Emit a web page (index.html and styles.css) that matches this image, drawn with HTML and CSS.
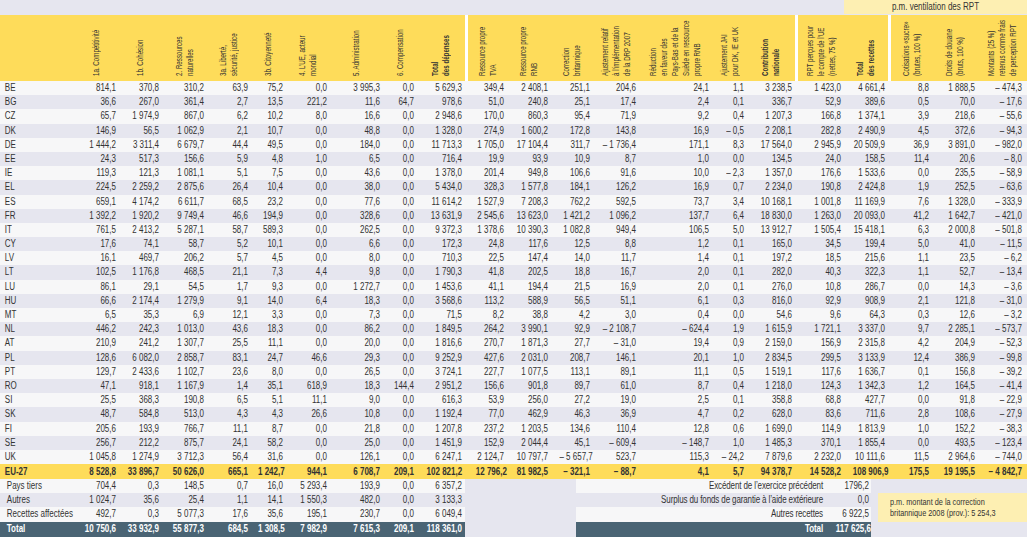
FILE: index.html
```html
<!DOCTYPE html>
<html lang="fr">
<head>
<meta charset="utf-8">
<title>Budget UE 2008</title>
<link rel="stylesheet" href="styles.css">
</head>
<body>
<div class="sheet">
  <div class="top"><div class="pm-head"><span>p.m. ventilation des RPT</span></div></div>
  <div class="head">
    <div></div>
    <div><span class="v">1a. Compétitivité</span></div>
    <div><span class="v">1b. Cohésion</span></div>
    <div><span class="v">2. Ressources<br>naturelles</span></div>
    <div><span class="v">3a. Liberté,<br>sécurité, justice</span></div>
    <div><span class="v">3b. Citoyenneté</span></div>
    <div><span class="v">4. L’UE, acteur<br>mondial</span></div>
    <div><span class="v">5. Administration</span></div>
    <div><span class="v">6. Compensation</span></div>
    <div><span class="v b">Total<br>des dépenses</span></div>
    <div class="sep"></div>
    <div><span class="v">Ressource propre<br>TVA</span></div>
    <div><span class="v">Ressource propre<br>RNB</span></div>
    <div><span class="v">Correction<br>britannique</span></div>
    <div><span class="v">Ajustement relatif<br>à l’implémentation<br>de la DRP 2007</span></div>
    <div><span class="v">Réduction<br>en faveur des<br>Pays-Bas et de la<br>Suède en ressource<br>propre RNB</span></div>
    <div><span class="v">Ajustement JAI<br>pour DK, IE et UK</span></div>
    <div><span class="v b">Contribution<br>nationale</span></div>
    <div class="sep"></div>
    <div><span class="v">RPT perçues pour<br>le compte de l’UE<br>(nettes, 75 %)</span></div>
    <div><span class="v b">Total<br>des recettes</span></div>
    <div class="sep"></div>
    <div><span class="v">Cotisations «sucre»<br>(brutes, 100 %)</span></div>
    <div><span class="v">Droits de douane<br>(bruts, 100 %)</span></div>
    <div><span class="v">Montants (25 %)<br>retenus comme frais<br>de perception RPT</span></div>
  </div>
  <div class="body">
    <div class="row"><span>BE</span><span>814,1</span><span>370,8</span><span>310,2</span><span>63,9</span><span>75,2</span><span>0,0</span><span>3 995,3</span><span>0,0</span><span>5 629,3</span><span>349,4</span><span>2 408,1</span><span>251,1</span><span>204,6</span><span>24,1</span><span>1,1</span><span>3 238,5</span><span>1 423,0</span><span>4 661,4</span><span>8,8</span><span>1 888,5</span><span>– 474,3</span></div>
    <div class="row"><span>BG</span><span>36,6</span><span>267,0</span><span>361,4</span><span>2,7</span><span>13,5</span><span>221,2</span><span>11,6</span><span>64,7</span><span>978,6</span><span>51,0</span><span>240,8</span><span>25,1</span><span>17,4</span><span>2,4</span><span>0,1</span><span>336,7</span><span>52,9</span><span>389,6</span><span>0,5</span><span>70,0</span><span>– 17,6</span></div>
    <div class="row"><span>CZ</span><span>65,7</span><span>1 974,9</span><span>867,0</span><span>6,2</span><span>10,2</span><span>8,0</span><span>16,6</span><span>0,0</span><span>2 948,6</span><span>170,0</span><span>860,3</span><span>95,4</span><span>71,9</span><span>9,2</span><span>0,4</span><span>1 207,3</span><span>166,8</span><span>1 374,1</span><span>3,9</span><span>218,6</span><span>– 55,6</span></div>
    <div class="row"><span>DK</span><span>146,9</span><span>56,5</span><span>1 062,9</span><span>2,1</span><span>10,7</span><span>0,0</span><span>48,8</span><span>0,0</span><span>1 328,0</span><span>274,9</span><span>1 600,2</span><span>172,8</span><span>143,8</span><span>16,9</span><span>– 0,5</span><span>2 208,1</span><span>282,8</span><span>2 490,9</span><span>4,5</span><span>372,6</span><span>– 94,3</span></div>
    <div class="row"><span>DE</span><span>1 444,2</span><span>3 311,4</span><span>6 679,7</span><span>44,4</span><span>49,5</span><span>0,0</span><span>184,0</span><span>0,0</span><span>11 713,3</span><span>1 705,0</span><span>17 104,4</span><span>311,7</span><span>– 1 736,4</span><span>171,1</span><span>8,3</span><span>17 564,0</span><span>2 945,9</span><span>20 509,9</span><span>36,9</span><span>3 891,0</span><span>– 982,0</span></div>
    <div class="row"><span>EE</span><span>24,3</span><span>517,3</span><span>156,6</span><span>5,9</span><span>4,8</span><span>1,0</span><span>6,5</span><span>0,0</span><span>716,4</span><span>19,9</span><span>93,9</span><span>10,9</span><span>8,7</span><span>1,0</span><span>0,0</span><span>134,5</span><span>24,0</span><span>158,5</span><span>11,4</span><span>20,6</span><span>– 8,0</span></div>
    <div class="row"><span>IE</span><span>119,3</span><span>121,3</span><span>1 081,1</span><span>5,1</span><span>7,5</span><span>0,0</span><span>43,6</span><span>0,0</span><span>1 378,0</span><span>201,4</span><span>949,8</span><span>106,6</span><span>91,6</span><span>10,0</span><span>– 2,3</span><span>1 357,0</span><span>176,6</span><span>1 533,6</span><span>0,0</span><span>235,5</span><span>– 58,9</span></div>
    <div class="row"><span>EL</span><span>224,5</span><span>2 259,2</span><span>2 875,6</span><span>26,4</span><span>10,4</span><span>0,0</span><span>38,0</span><span>0,0</span><span>5 434,0</span><span>328,3</span><span>1 577,8</span><span>184,1</span><span>126,2</span><span>16,9</span><span>0,7</span><span>2 234,0</span><span>190,8</span><span>2 424,8</span><span>1,9</span><span>252,5</span><span>– 63,6</span></div>
    <div class="row"><span>ES</span><span>659,1</span><span>4 174,2</span><span>6 611,7</span><span>68,5</span><span>23,2</span><span>0,0</span><span>77,6</span><span>0,0</span><span>11 614,2</span><span>1 527,9</span><span>7 208,3</span><span>762,2</span><span>592,5</span><span>73,7</span><span>3,4</span><span>10 168,1</span><span>1 001,8</span><span>11 169,9</span><span>7,6</span><span>1 328,0</span><span>– 333,9</span></div>
    <div class="row"><span>FR</span><span>1 392,2</span><span>1 920,2</span><span>9 749,4</span><span>46,6</span><span>194,9</span><span>0,0</span><span>328,6</span><span>0,0</span><span>13 631,9</span><span>2 545,6</span><span>13 623,0</span><span>1 421,2</span><span>1 096,2</span><span>137,7</span><span>6,4</span><span>18 830,0</span><span>1 263,0</span><span>20 093,0</span><span>41,2</span><span>1 642,7</span><span>– 421,0</span></div>
    <div class="row"><span>IT</span><span>761,5</span><span>2 413,2</span><span>5 287,1</span><span>58,7</span><span>589,3</span><span>0,0</span><span>262,5</span><span>0,0</span><span>9 372,3</span><span>1 378,6</span><span>10 390,3</span><span>1 082,8</span><span>949,4</span><span>106,5</span><span>5,0</span><span>13 912,7</span><span>1 505,4</span><span>15 418,1</span><span>6,3</span><span>2 000,8</span><span>– 501,8</span></div>
    <div class="row"><span>CY</span><span>17,6</span><span>74,1</span><span>58,7</span><span>5,2</span><span>10,1</span><span>0,0</span><span>6,6</span><span>0,0</span><span>172,3</span><span>24,8</span><span>117,6</span><span>12,5</span><span>8,8</span><span>1,2</span><span>0,1</span><span>165,0</span><span>34,5</span><span>199,4</span><span>5,0</span><span>41,0</span><span>– 11,5</span></div>
    <div class="row"><span>LV</span><span>16,1</span><span>469,7</span><span>206,2</span><span>5,7</span><span>4,5</span><span>0,0</span><span>8,0</span><span>0,0</span><span>710,3</span><span>22,5</span><span>147,4</span><span>14,0</span><span>11,7</span><span>1,4</span><span>0,1</span><span>197,2</span><span>18,5</span><span>215,6</span><span>1,1</span><span>23,5</span><span>– 6,2</span></div>
    <div class="row"><span>LT</span><span>102,5</span><span>1 176,8</span><span>468,5</span><span>21,1</span><span>7,3</span><span>4,4</span><span>9,8</span><span>0,0</span><span>1 790,3</span><span>41,8</span><span>202,5</span><span>18,8</span><span>16,7</span><span>2,0</span><span>0,1</span><span>282,0</span><span>40,3</span><span>322,3</span><span>1,1</span><span>52,7</span><span>– 13,4</span></div>
    <div class="row"><span>LU</span><span>86,1</span><span>29,1</span><span>54,5</span><span>1,7</span><span>9,3</span><span>0,0</span><span>1 272,7</span><span>0,0</span><span>1 453,6</span><span>41,1</span><span>194,4</span><span>21,5</span><span>16,9</span><span>2,0</span><span>0,1</span><span>276,0</span><span>10,8</span><span>286,7</span><span>0,0</span><span>14,3</span><span>– 3,6</span></div>
    <div class="row"><span>HU</span><span>66,6</span><span>2 174,4</span><span>1 279,9</span><span>9,1</span><span>14,0</span><span>6,4</span><span>18,3</span><span>0,0</span><span>3 568,6</span><span>113,2</span><span>588,9</span><span>56,5</span><span>51,1</span><span>6,1</span><span>0,3</span><span>816,0</span><span>92,9</span><span>908,9</span><span>2,1</span><span>121,8</span><span>– 31,0</span></div>
    <div class="row"><span>MT</span><span>6,5</span><span>35,3</span><span>6,9</span><span>12,1</span><span>3,3</span><span>0,0</span><span>7,3</span><span>0,0</span><span>71,5</span><span>8,2</span><span>38,8</span><span>4,2</span><span>3,0</span><span>0,4</span><span>0,0</span><span>54,6</span><span>9,6</span><span>64,3</span><span>0,3</span><span>12,6</span><span>– 3,2</span></div>
    <div class="row"><span>NL</span><span>446,2</span><span>242,3</span><span>1 013,0</span><span>43,6</span><span>18,3</span><span>0,0</span><span>86,2</span><span>0,0</span><span>1 849,5</span><span>264,2</span><span>3 990,1</span><span>92,9</span><span>– 2 108,7</span><span>– 624,4</span><span>1,9</span><span>1 615,9</span><span>1 721,1</span><span>3 337,0</span><span>9,7</span><span>2 285,1</span><span>– 573,7</span></div>
    <div class="row"><span>AT</span><span>210,9</span><span>241,2</span><span>1 307,7</span><span>25,5</span><span>11,1</span><span>0,0</span><span>20,0</span><span>0,0</span><span>1 816,6</span><span>270,7</span><span>1 871,3</span><span>27,7</span><span>– 31,0</span><span>19,4</span><span>0,9</span><span>2 159,0</span><span>156,9</span><span>2 315,8</span><span>4,2</span><span>204,9</span><span>– 52,3</span></div>
    <div class="row"><span>PL</span><span>128,6</span><span>6 082,0</span><span>2 858,7</span><span>83,1</span><span>24,7</span><span>46,6</span><span>29,3</span><span>0,0</span><span>9 252,9</span><span>427,6</span><span>2 031,0</span><span>208,7</span><span>146,1</span><span>20,1</span><span>1,0</span><span>2 834,5</span><span>299,5</span><span>3 133,9</span><span>12,4</span><span>386,9</span><span>– 99,8</span></div>
    <div class="row"><span>PT</span><span>129,7</span><span>2 433,6</span><span>1 102,7</span><span>23,6</span><span>8,0</span><span>0,0</span><span>26,5</span><span>0,0</span><span>3 724,1</span><span>227,7</span><span>1 077,5</span><span>113,1</span><span>89,1</span><span>11,1</span><span>0,5</span><span>1 519,1</span><span>117,6</span><span>1 636,7</span><span>0,1</span><span>156,8</span><span>– 39,2</span></div>
    <div class="row"><span>RO</span><span>47,1</span><span>918,1</span><span>1 167,9</span><span>1,4</span><span>35,1</span><span>618,9</span><span>18,3</span><span>144,4</span><span>2 951,2</span><span>156,6</span><span>901,8</span><span>89,7</span><span>61,0</span><span>8,7</span><span>0,4</span><span>1 218,0</span><span>124,3</span><span>1 342,3</span><span>1,2</span><span>164,5</span><span>– 41,4</span></div>
    <div class="row"><span>SI</span><span>25,5</span><span>368,3</span><span>190,8</span><span>6,5</span><span>5,1</span><span>11,1</span><span>9,0</span><span>0,0</span><span>616,3</span><span>53,9</span><span>256,0</span><span>27,2</span><span>19,0</span><span>2,5</span><span>0,1</span><span>358,8</span><span>68,8</span><span>427,7</span><span>0,0</span><span>91,8</span><span>– 22,9</span></div>
    <div class="row"><span>SK</span><span>48,7</span><span>584,8</span><span>513,0</span><span>4,3</span><span>4,3</span><span>26,6</span><span>10,8</span><span>0,0</span><span>1 192,4</span><span>77,0</span><span>462,9</span><span>46,3</span><span>36,9</span><span>4,7</span><span>0,2</span><span>628,0</span><span>83,6</span><span>711,6</span><span>2,8</span><span>108,6</span><span>– 27,9</span></div>
    <div class="row"><span>FI</span><span>205,6</span><span>193,9</span><span>766,7</span><span>11,1</span><span>8,7</span><span>0,0</span><span>21,8</span><span>0,0</span><span>1 207,8</span><span>237,2</span><span>1 203,5</span><span>134,6</span><span>110,4</span><span>12,8</span><span>0,6</span><span>1 699,0</span><span>114,9</span><span>1 813,9</span><span>1,0</span><span>152,2</span><span>– 38,3</span></div>
    <div class="row"><span>SE</span><span>256,7</span><span>212,2</span><span>875,7</span><span>24,1</span><span>58,2</span><span>0,0</span><span>25,0</span><span>0,0</span><span>1 451,9</span><span>152,9</span><span>2 044,4</span><span>45,1</span><span>– 609,4</span><span>– 148,7</span><span>1,0</span><span>1 485,3</span><span>370,1</span><span>1 855,4</span><span>0,0</span><span>493,5</span><span>– 123,4</span></div>
    <div class="row"><span>UK</span><span>1 045,8</span><span>1 274,9</span><span>3 712,3</span><span>56,4</span><span>31,6</span><span>0,0</span><span>126,1</span><span>0,0</span><span>6 247,1</span><span>2 124,7</span><span>10 797,7</span><span>– 5 657,7</span><span>523,7</span><span>115,3</span><span>– 24,2</span><span>7 879,6</span><span>2 232,0</span><span>10 111,6</span><span>11,5</span><span>2 964,6</span><span>– 744,0</span></div>
  </div>
  <div class="row eu"><span>EU-27</span><span>8 528,8</span><span>33 896,7</span><span>50 626,0</span><span>665,1</span><span>1 242,7</span><span>944,1</span><span>6 708,7</span><span>209,1</span><span>102 821,2</span><span>12 796,2</span><span>81 982,5</span><span>– 321,1</span><span>– 88,7</span><span>4,1</span><span>5,7</span><span>94 378,7</span><span>14 528,2</span><span>108 906,9</span><span>175,5</span><span>19 195,5</span><span>– 4 842,7</span></div>
  <div class="foot">
    <div class="fl">
      <div class="frow"><span>Pays tiers</span><span>704,4</span><span>0,3</span><span>148,5</span><span>0,7</span><span>16,0</span><span>5 293,4</span><span>193,9</span><span>0,0</span><span>6 357,2</span></div>
      <div class="frow alt"><span>Autres</span><span>1 024,7</span><span>35,6</span><span>25,4</span><span>1,1</span><span>14,1</span><span>1 550,3</span><span>482,0</span><span>0,0</span><span>3 133,3</span></div>
      <div class="frow r3"><span>Recettes affectées</span><span>492,7</span><span>0,3</span><span>5 077,3</span><span>17,6</span><span>35,6</span><span>195,1</span><span>230,7</span><span>0,0</span><span>6 049,4</span></div>
      <div class="frow tot"><span>Total</span><span>10 750,6</span><span>33 932,9</span><span>55 877,3</span><span>684,5</span><span>1 308,5</span><span>7 982,9</span><span>7 615,3</span><span>209,1</span><span>118 361,0</span></div>
    </div>
    <div class="gap"></div>
    <div class="fm">
      <div class="frow"><span>Excédent de l’exercice précédent</span><span>1796,2</span></div>
      <div class="frow alt"><span>Surplus du fonds de garantie à l’aide extérieure</span><span>0,0</span></div>
      <div class="frow r3"><span>Autres recettes</span><span>6 922,5</span></div>
      <div class="frow tot"><span>Total</span><span>117 625,6</span></div>
    </div>
    <div class="fs">
      <div class="note"><span>p.m. montant de la correction</span><span>britannique 2008 (prov.): 5 254,3</span></div>
    </div>
  </div>
</div>
</body>
</html>
```

FILE: styles.css
```css
* {
  box-sizing: border-box;
  margin: 0;
  padding: 0;
}

html, body {
  width: 1027px;
  height: 537px;
  overflow: hidden;
}

body {
  background: #e6e6ef;
  color: #333;
  font-family: "Liberation Sans", Arial, sans-serif;
  font-size: 10px;
}

.sheet {
  --cols: 74px 45px 43px 45px 44px 35px 44px 53px 34px 48px 3px 39px 44px 42px 46px 73px 35px 48px 3px 46px 44px 3px 41px 46px 49px;
  width: 1027px;
}

.top {
  display: grid;
  grid-template-columns: var(--cols);
  height: 15px;
}

.pm-head {
  grid-column: 21 / 26;
  height: 14px;
  background: #fdefb2;
  text-align: center;
  line-height: 14px;
}

.pm-head > span {
  display: inline-block;
  transform: scaleX(0.8);
  white-space: nowrap;
}

.head {
  display: grid;
  grid-template-columns: var(--cols);
  height: 66px;
  background: #fedc5a;
}

.head > div {
  display: flex;
  align-items: flex-end;
  justify-content: center;
  padding-bottom: 5px;
}

.head > .sep {
  background: #fff;
}

/* rotated label: the box is 0 high and sits on the bottom padding line;
   text is flipped upward from there and compressed along its length */
.v {
  writing-mode: vertical-rl;
  height: 0;
  white-space: nowrap;
  font-size: 8.6px;
  line-height: 11px;
  transform-origin: 50% 0;
  transform: rotate(180deg) scaleY(0.72);
}

.b {
  font-weight: bold;
}

.row {
  display: grid;
  grid-template-columns: var(--cols);
  height: 14.2px;
  line-height: 14.2px;
  background: #f7f7f8;
}

.body .row:nth-child(even) {
  background: #e6e6ef;
}

.row > span,
.frow > span {
  text-align: right;
  padding-right: 3.75px;
  white-space: nowrap;
  transform: scaleX(0.8);
  transform-origin: 100% 50%;
}

.row > span:first-child,
.fl .frow > span:first-child {
  text-align: left;
  padding-left: 6px;
  transform-origin: 0 50%;
}

.row > span:nth-child(11) {
  grid-column: 12;
}

.row > span:nth-child(18) {
  grid-column: 20;
}

.row > span:nth-child(20) {
  grid-column: 23;
}

.row > span:nth-child(22) {
  padding-right: 6.25px;
}

.row.eu {
  height: 15px;
  line-height: 15px;
  background: #fedc5a;
  font-weight: bold;
}

.foot {
  display: flex;
  height: 57.6px;
}

.fl {
  width: 465px;
}

.fl .frow {
  display: grid;
  grid-template-columns: 74px 45px 43px 45px 44px 35px 44px 53px 34px 48px;
}

.fl .frow > span:first-child {
  padding-left: 8.5px;
}

.gap {
  width: 128px;
  background: #e6e6ef;
}

.fm {
  width: 295px;
}

.fm .frow {
  display: grid;
  grid-template-columns: 251px 44px;
}

.fm .frow > span:first-child {
  padding-right: 5px;
  letter-spacing: -0.15px;
}

.fm .frow > span:last-child {
  padding-right: 2.5px;
}

.frow {
  height: 14.2px;
  line-height: 14.2px;
  background: #f7f7f8;
}

.frow.alt {
  background: #e6e6ef;
}

.frow.r3 {
  height: 14.5px;
  line-height: 14.5px;
}

.frow.tot {
  height: 14.7px;
  line-height: 14.7px;
  background: #4a6474;
  color: #fff;
  font-weight: bold;
}

.fs {
  flex: 1;
  background: #e6e6ef;
  padding: 14px 0 0 7px;
}

.note {
  height: 29px;
  background: #fdefb2;
  padding: 3px 0 0 12px;
  line-height: 11px;
  font-size: 9.5px;
}

.note > span {
  display: block;
  white-space: nowrap;
  transform: scaleX(0.77);
  transform-origin: 0 50%;
}
```
